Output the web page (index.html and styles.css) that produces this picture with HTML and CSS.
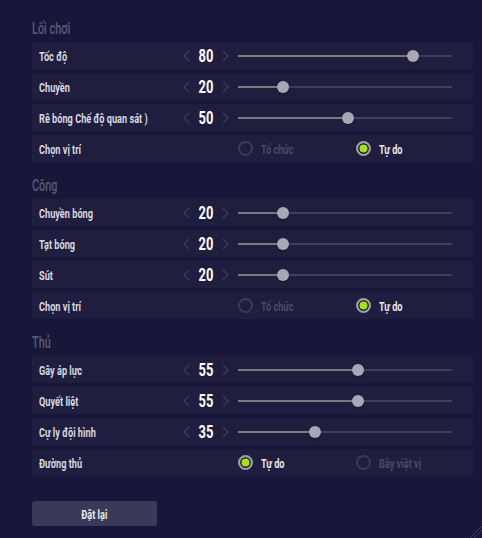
FILE: index.html
```html
<!DOCTYPE html>
<html lang="vi">
<head>
<meta charset="utf-8">
<link rel="stylesheet" href="styles.css">
</head>
<body>
<div class="panel">
  <section class="group">
    <h2 class="group-title"><span class="cond">Lối chơi</span></h2>
    <div class="row">
      <span class="label cond">Tốc độ</span>
      <div class="stepper"><svg class="chev" viewBox="0 0 7 12"><path d="M6 1 L1 6 L6 11"/></svg><span class="num cond">80</span><svg class="chev" viewBox="0 0 7 12"><path d="M1 1 L6 6 L1 11"/></svg></div>
      <div class="slider"><div class="fill" style="width:175px"></div><div class="thumb" style="left:175px"></div></div>
    </div>
    <div class="row">
      <span class="label cond">Chuyền</span>
      <div class="stepper"><svg class="chev" viewBox="0 0 7 12"><path d="M6 1 L1 6 L6 11"/></svg><span class="num cond">20</span><svg class="chev" viewBox="0 0 7 12"><path d="M1 1 L6 6 L1 11"/></svg></div>
      <div class="slider"><div class="fill" style="width:45px"></div><div class="thumb" style="left:45px"></div></div>
    </div>
    <div class="row">
      <span class="label cond">Rê bóng Chế độ quan sát )</span>
      <div class="stepper"><svg class="chev" viewBox="0 0 7 12"><path d="M6 1 L1 6 L6 11"/></svg><span class="num cond">50</span><svg class="chev" viewBox="0 0 7 12"><path d="M1 1 L6 6 L1 11"/></svg></div>
      <div class="slider"><div class="fill" style="width:110px"></div><div class="thumb" style="left:110px"></div></div>
    </div>
    <div class="row">
      <span class="label cond">Chọn vị trí</span>
      <div class="radios">
        <span class="opt"><span class="radio"></span><span class="cond">Tổ chức</span></span>
        <span class="opt on"><span class="radio"></span><span class="cond">Tự do</span></span>
      </div>
    </div>
  </section>

  <section class="group">
    <h2 class="group-title"><span class="cond">Công</span></h2>
    <div class="row">
      <span class="label cond">Chuyền bóng</span>
      <div class="stepper"><svg class="chev" viewBox="0 0 7 12"><path d="M6 1 L1 6 L6 11"/></svg><span class="num cond">20</span><svg class="chev" viewBox="0 0 7 12"><path d="M1 1 L6 6 L1 11"/></svg></div>
      <div class="slider"><div class="fill" style="width:45px"></div><div class="thumb" style="left:45px"></div></div>
    </div>
    <div class="row">
      <span class="label cond">Tạt bóng</span>
      <div class="stepper"><svg class="chev" viewBox="0 0 7 12"><path d="M6 1 L1 6 L6 11"/></svg><span class="num cond">20</span><svg class="chev" viewBox="0 0 7 12"><path d="M1 1 L6 6 L1 11"/></svg></div>
      <div class="slider"><div class="fill" style="width:45px"></div><div class="thumb" style="left:45px"></div></div>
    </div>
    <div class="row">
      <span class="label cond">Sút</span>
      <div class="stepper"><svg class="chev" viewBox="0 0 7 12"><path d="M6 1 L1 6 L6 11"/></svg><span class="num cond">20</span><svg class="chev" viewBox="0 0 7 12"><path d="M1 1 L6 6 L1 11"/></svg></div>
      <div class="slider"><div class="fill" style="width:45px"></div><div class="thumb" style="left:45px"></div></div>
    </div>
    <div class="row">
      <span class="label cond">Chọn vị trí</span>
      <div class="radios">
        <span class="opt"><span class="radio"></span><span class="cond">Tổ chức</span></span>
        <span class="opt on"><span class="radio"></span><span class="cond">Tự do</span></span>
      </div>
    </div>
  </section>

  <section class="group">
    <h2 class="group-title"><span class="cond">Thủ</span></h2>
    <div class="row">
      <span class="label cond">Gây áp lực</span>
      <div class="stepper"><svg class="chev" viewBox="0 0 7 12"><path d="M6 1 L1 6 L6 11"/></svg><span class="num cond">55</span><svg class="chev" viewBox="0 0 7 12"><path d="M1 1 L6 6 L1 11"/></svg></div>
      <div class="slider"><div class="fill" style="width:120px"></div><div class="thumb" style="left:120px"></div></div>
    </div>
    <div class="row">
      <span class="label cond">Quyết liệt</span>
      <div class="stepper"><svg class="chev" viewBox="0 0 7 12"><path d="M6 1 L1 6 L6 11"/></svg><span class="num cond">55</span><svg class="chev" viewBox="0 0 7 12"><path d="M1 1 L6 6 L1 11"/></svg></div>
      <div class="slider"><div class="fill" style="width:120px"></div><div class="thumb" style="left:120px"></div></div>
    </div>
    <div class="row">
      <span class="label cond">Cự ly đội hình</span>
      <div class="stepper"><svg class="chev" viewBox="0 0 7 12"><path d="M6 1 L1 6 L6 11"/></svg><span class="num cond">35</span><svg class="chev" viewBox="0 0 7 12"><path d="M1 1 L6 6 L1 11"/></svg></div>
      <div class="slider"><div class="fill" style="width:77px"></div><div class="thumb" style="left:77px"></div></div>
    </div>
    <div class="row">
      <span class="label cond">Đường thủ</span>
      <div class="radios">
        <span class="opt on"><span class="radio"></span><span class="cond">Tự do</span></span>
        <span class="opt"><span class="radio"></span><span class="cond">Bẫy việt vị</span></span>
      </div>
    </div>
  </section>

  <button class="reset"><span class="cond mid">Đặt lại</span></button>
</div>
<svg class="corner" viewBox="0 0 16 16"><path d="M16 4 L4 16 M16 8 L8 16"/></svg>
</body>
</html>
```
FILE: styles.css
```css
html, body {
  margin: 0;
  height: 100%;
}
body {
  background: #18173a;
  font-family: Roboto, "Noto Sans", "Liberation Sans", sans-serif;
  font-weight: 700;
  color: #d8d8e0;
  overflow: hidden;
  position: relative;
}
.cond {
  display: inline-block;
  white-space: nowrap;
  transform: scaleX(0.68);
  transform-origin: 0 50%;
}
.cond.mid {
  transform-origin: 50% 50%;
}
.panel {
  padding: 19px 9px 0 32px;
  display: flex;
  flex-direction: column;
}
.group {
  display: flex;
  flex-direction: column;
  gap: 4px;
  margin-bottom: 14px;
}
.group-title {
  margin: 0;
  font-size: 16px;
  line-height: 19px;
  height: 19px;
  color: #5b5a77;
  font-weight: 500;
}
.row {
  height: 27px;
  background: #1f1e3e;
  display: grid;
  grid-template-columns: 142px 48px 223px;
  padding: 0 21px 0 7px;
  align-items: center;
}
.row .slider, .row .radios {
  margin-left: 9px;
}
.label {
  font-size: 13.5px;
  line-height: 18px;
}
.stepper {
  display: flex;
  align-items: center;
  justify-content: space-between;
  padding: 0 0 0 2px;
}
.chev {
  width: 7px;
  height: 12px;
  fill: none;
  stroke: #3c3b5d;
  stroke-width: 1.3;
}
.num {
  font-size: 19px;
  line-height: 20px;
  color: #ffffff;
  transform-origin: 50% 50%;
}
.slider {
  position: relative;
  height: 2px;
  background: #3f3e5f;
}
.fill {
  height: 2px;
  background: #7b7a80;
}
.thumb {
  position: absolute;
  top: 50%;
  width: 12px;
  height: 12px;
  margin: -6px 0 0 -6px;
  border-radius: 50%;
  background: #a9a7b5;
  box-shadow: 0 1px 2px rgba(0,0,0,0.35);
}
.radios {
  grid-column: 3;
  display: grid;
  grid-template-columns: 118px 100px;
  align-items: center;
}
.opt {
  display: flex;
  align-items: center;
  gap: 8px;
  font-size: 13.5px;
  color: #4a4969;
}
.radio {
  flex: none;
  width: 11px;
  height: 11px;
  border-radius: 50%;
  border: 2px solid #3b3a5a;
}
.opt.on {
  color: #e8e8ee;
}
.opt.on .radio {
  border-color: #a09eab;
  background: #a3e21b;
  box-shadow: inset 0 0 0 1.5px #18173a;
}
.reset {
  margin-top: 11px;
  width: 125px;
  height: 25px;
  border: 0;
  border-radius: 3px;
  background: #3a3957;
  color: #e8e8ee;
  font-family: inherit;
  font-weight: 700;
  font-size: 13.5px;
  padding: 0;
}
.corner {
  position: absolute;
  right: 0;
  bottom: 0;
  width: 16px;
  height: 16px;
  fill: none;
  stroke: #3a3a5e;
  stroke-width: 1;
}
```
